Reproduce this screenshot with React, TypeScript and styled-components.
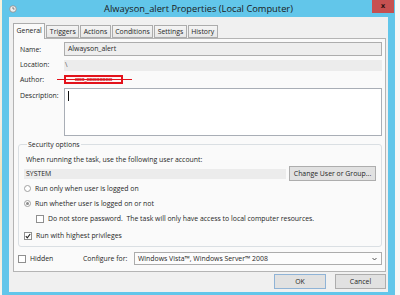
import React from "react";
import styled, { createGlobalStyle } from "styled-components";

const GlobalStyle = createGlobalStyle`
  html, body {
    margin: 0;
    padding: 0;
  }
  body {
    width: 400px;
    height: 295px;
    overflow: hidden;
    background: #f4f3ef;
    font-family: "Open Sans", "Noto Sans", sans-serif;
    font-size: 6.9px;
    color: #262626;
  }
`;

const Screen = styled.div`
  display: flex;
  width: 400px;
  height: 295px;
`;

const DesktopEdge = styled.div<{ $w: number; $tone: string }>`
  flex: none;
  width: ${(p) => p.$w}px;
  background: ${(p) => p.$tone};
`;

const Window = styled.div`
  flex: none;
  width: 393px;
  display: flex;
  flex-direction: column;
  background: #62c6ea;
`;

const TitleBar = styled.div`
  height: 17px;
  flex: none;
  display: grid;
  grid-template-columns: 1fr auto 1fr;
  align-items: start;
`;

const TitleIcon = styled.svg`
  margin: 5px 0 0 7px;
  width: 8px;
  height: 8px;
`;

const TitleText = styled.div`
  font-size: 9.3px;
  line-height: 18px;
  color: #1a1a1a;
  white-space: nowrap;
`;

const CloseButton = styled.div`
  justify-self: end;
  margin-right: 1px;
  width: 22px;
  height: 13px;
  background: #c75050;
  color: #2b1010;
  font-family: "DejaVu Sans", sans-serif;
  font-weight: bold;
  font-size: 7px;
  line-height: 13px;
  text-align: center;
`;

const Client = styled.div`
  flex: 1;
  margin: 0 7px 3px;
  padding: 6px 2px 3px 4px;
  background: #f0f0f0;
  display: flex;
  flex-direction: column;
`;

const TabStrip = styled.div`
  height: 15px;
  flex: none;
  display: flex;
  align-items: flex-end;
`;

const Tab = styled.div<{ $active?: boolean }>`
  position: relative;
  z-index: ${(p) => (p.$active ? 1 : 0)};
  box-sizing: border-box;
  height: ${(p) => (p.$active ? 16 : 13)}px;
  margin-bottom: ${(p) => (p.$active ? -1 : 0)}px;
  margin-right: 1px;
  padding: 0 2.5px;
  border: 1px solid #acacac;
  border-bottom: ${(p) => (p.$active ? "none" : "1px solid #acacac")};
  background: ${(p) => (p.$active ? "#fafafa" : "linear-gradient(#f4f4f4, #e7e7e7)")};
  line-height: ${(p) => (p.$active ? 14 : 12)}px;
  white-space: nowrap;
`;

const Panel = styled.div`
  flex: 1;
  box-sizing: border-box;
  border: 1px solid #b4b4b4;
  background: #fafafa;
  padding: 3px 3px 0 4px;
  display: flex;
  flex-direction: column;
`;

const FormGrid = styled.div`
  display: grid;
  grid-template-columns: 46px 1fr;
  grid-template-rows: 14px 13px 13px 48px;
  row-gap: 2px;
`;

const Label = styled.div<{ $top?: boolean }>`
  padding-left: 2px;
  align-self: ${(p) => (p.$top ? "start" : "center")};
  padding-top: ${(p) => (p.$top ? 3 : 0)}px;
  line-height: 9px;
  white-space: nowrap;
`;

const ReadOnlyBox = styled.div`
  box-sizing: border-box;
  border: 1px solid #adadad;
  background: #eeeeee;
  padding-left: 3px;
  line-height: 12px;
`;

const Band = styled.div<{ $end?: boolean }>`
  align-self: ${(p) => (p.$end ? "end" : "stretch")};
  height: ${(p) => (p.$end ? "11px" : "auto")};
  background: #ececec;
  line-height: 10px;
  color: #555;
  padding-left: 1px;
`;

const AuthorCell = styled.div`
  display: flex;
  align-items: center;
`;

const Redacted = styled.span`
  position: relative;
  width: 59px;
  height: 9px;
  box-sizing: border-box;
  border: 2px solid #e3121b;
  background: #fff4f4;
  color: #c9141c;
  font-size: 5.5px;
  font-weight: bold;
  line-height: 5px;
  text-align: center;
  white-space: nowrap;
  overflow: visible;
  &::after {
    content: "";
    position: absolute;
    left: -9px;
    right: -11px;
    top: 2px;
    height: 1px;
    background: #e3121b;
  }
`;

const TextArea = styled.div`
  box-sizing: border-box;
  border: 1px solid #a9aeb6;
  background: #ffffff;
  padding: 2px 0 0 3px;
`;

const Caret = styled.div`
  width: 1px;
  height: 10px;
  background: #111;
`;

const Group = styled.fieldset`
  margin: 4px 0 0;
  min-width: 0;
  padding: 6px 5px 3px 5px;
  border: 1px solid #dadfe3;
  border-radius: 3px;
  display: flex;
  flex-direction: column;
`;

const Legend = styled.legend`
  margin-left: 3px;
  padding: 0 1px;
  line-height: 9px;
`;

const Line = styled.div`
  height: 11px;
  line-height: 9px;
  padding-left: 2px;
  white-space: nowrap;
`;

const AccountRow = styled.div`
  height: 15px;
  display: flex;
  align-items: center;
  gap: 3px;
`;

const AccountField = styled.div`
  flex: 1;
  height: 10px;
  background: #ececec;
  padding-left: 2px;
  line-height: 10px;
`;

const Button = styled.div<{ $w: number; $default?: boolean }>`
  box-sizing: border-box;
  width: ${(p) => p.$w}px;
  height: 15px;
  border: 1px solid ${(p) => (p.$default ? "#8fb3d6" : "#adadad")};
  background: #e1e1e1;
  text-align: center;
  line-height: 13px;
  white-space: nowrap;
`;

const Option = styled.div<{ $indent?: number; $mt?: number }>`
  height: 15px;
  margin-top: ${(p) => p.$mt ?? 0}px;
  padding-left: ${(p) => p.$indent ?? 0}px;
  display: flex;
  align-items: center;
  gap: 4px;
  white-space: pre;
`;

const Radio = styled.span<{ $on?: boolean }>`
  flex: none;
  box-sizing: border-box;
  width: 7px;
  height: 7px;
  border-radius: 50%;
  border: 1px solid #a0a0a0;
  background: #fff;
  display: flex;
  align-items: center;
  justify-content: center;
  &::after {
    content: "";
    display: ${(p) => (p.$on ? "block" : "none")};
    width: 3px;
    height: 3px;
    border-radius: 50%;
    background: #8a8a8a;
  }
`;

const Check = styled.span`
  flex: none;
  box-sizing: border-box;
  width: 8px;
  height: 8px;
  border: 1px solid #8f8f8f;
  background: #fff;
  display: flex;
  align-items: center;
  justify-content: center;
`;

const BottomRow = styled.div`
  margin-top: 4px;
  display: grid;
  grid-template-columns: 65px 51px 1fr;
  align-items: center;
  height: 13px;
`;

const Combo = styled.div`
  box-sizing: border-box;
  height: 13px;
  border: 1px solid #acacac;
  background: #fcfcfc;
  padding: 0 4px 0 3px;
  display: flex;
  align-items: center;
  justify-content: space-between;
  white-space: nowrap;
`;

const ButtonRow = styled.div`
  margin-top: 2px;
  height: 15px;
  flex: none;
  display: flex;
  justify-content: flex-end;
  gap: 9px;
`;

const Tick = () => (
  <svg width="6" height="6" viewBox="0 0 6 6">
    <path d="M0.8 3.2 L2.3 4.8 L5.2 1" fill="none" stroke="#222" strokeWidth="1.1" />
  </svg>
);

const tabs = ["General", "Triggers", "Actions", "Conditions", "Settings", "History"];

export default function App() {
  return (
    <>
      <GlobalStyle />
      <Screen>
        <DesktopEdge $w={2} $tone="linear-gradient(#f7f2dc, #f3efe6 40%, #efe4bb 60%, #f6f4ee)" />
        <Window>
          <TitleBar>
            <TitleIcon viewBox="0 0 8 8">
              <circle cx="4" cy="4" r="3.3" fill="#eeeeee" stroke="#8c8c8c" strokeWidth="0.8" />
              <path d="M4 2 V4 H5.6" fill="none" stroke="#555" strokeWidth="0.7" />
            </TitleIcon>
            <TitleText>Alwayson_alert Properties (Local Computer)</TitleText>
            <CloseButton>x</CloseButton>
          </TitleBar>
          <Client>
            <TabStrip>
              {tabs.map((t, i) => (
                <Tab key={t} $active={i === 0}>
                  {t}
                </Tab>
              ))}
            </TabStrip>
            <Panel>
              <FormGrid>
                <Label>Name:</Label>
                <ReadOnlyBox>Alwayson_alert</ReadOnlyBox>
                <Label>Location:</Label>
                <Band $end>\</Band>
                <Label>Author:</Label>
                <AuthorCell>
                  <Redacted>xxx_xxxxxxxx</Redacted>
                </AuthorCell>
                <Label $top>Description:</Label>
                <TextArea>
                  <Caret />
                </TextArea>
              </FormGrid>

              <Group>
                <Legend>Security options</Legend>
                <Line>When running the task, use the following user account:</Line>
                <AccountRow>
                  <AccountField>SYSTEM</AccountField>
                  <Button $w={87}>Change User or Group...</Button>
                </AccountRow>
                <Option>
                  <Radio />
                  Run only when user is logged on
                </Option>
                <Option>
                  <Radio $on />
                  Run whether user is logged on or not
                </Option>
                <Option $indent={12}>
                  <Check />
                  {"Do not store password.  The task will only have access to local computer resources."}
                </Option>
                <Option $mt={2}>
                  <Check>
                    <Tick />
                  </Check>
                  Run with highest privileges
                </Option>
              </Group>

              <BottomRow>
                <Option>
                  <Check />
                  Hidden
                </Option>
                <span>Configure for:</span>
                <Combo>
                  <span>Windows Vista™, Windows Server™ 2008</span>
                  <svg width="5" height="4" viewBox="0 0 5 4">
                    <path d="M0.5 1 L2.5 3 L4.5 1" fill="none" stroke="#444" strokeWidth="0.9" />
                  </svg>
                </Combo>
              </BottomRow>
            </Panel>
            <ButtonRow>
              <Button $w={52} $default>
                OK
              </Button>
              <Button $w={51}>Cancel</Button>
            </ButtonRow>
          </Client>
        </Window>
        <DesktopEdge $w={5} $tone="#f7f7f7" />
      </Screen>
    </>
  );
}
